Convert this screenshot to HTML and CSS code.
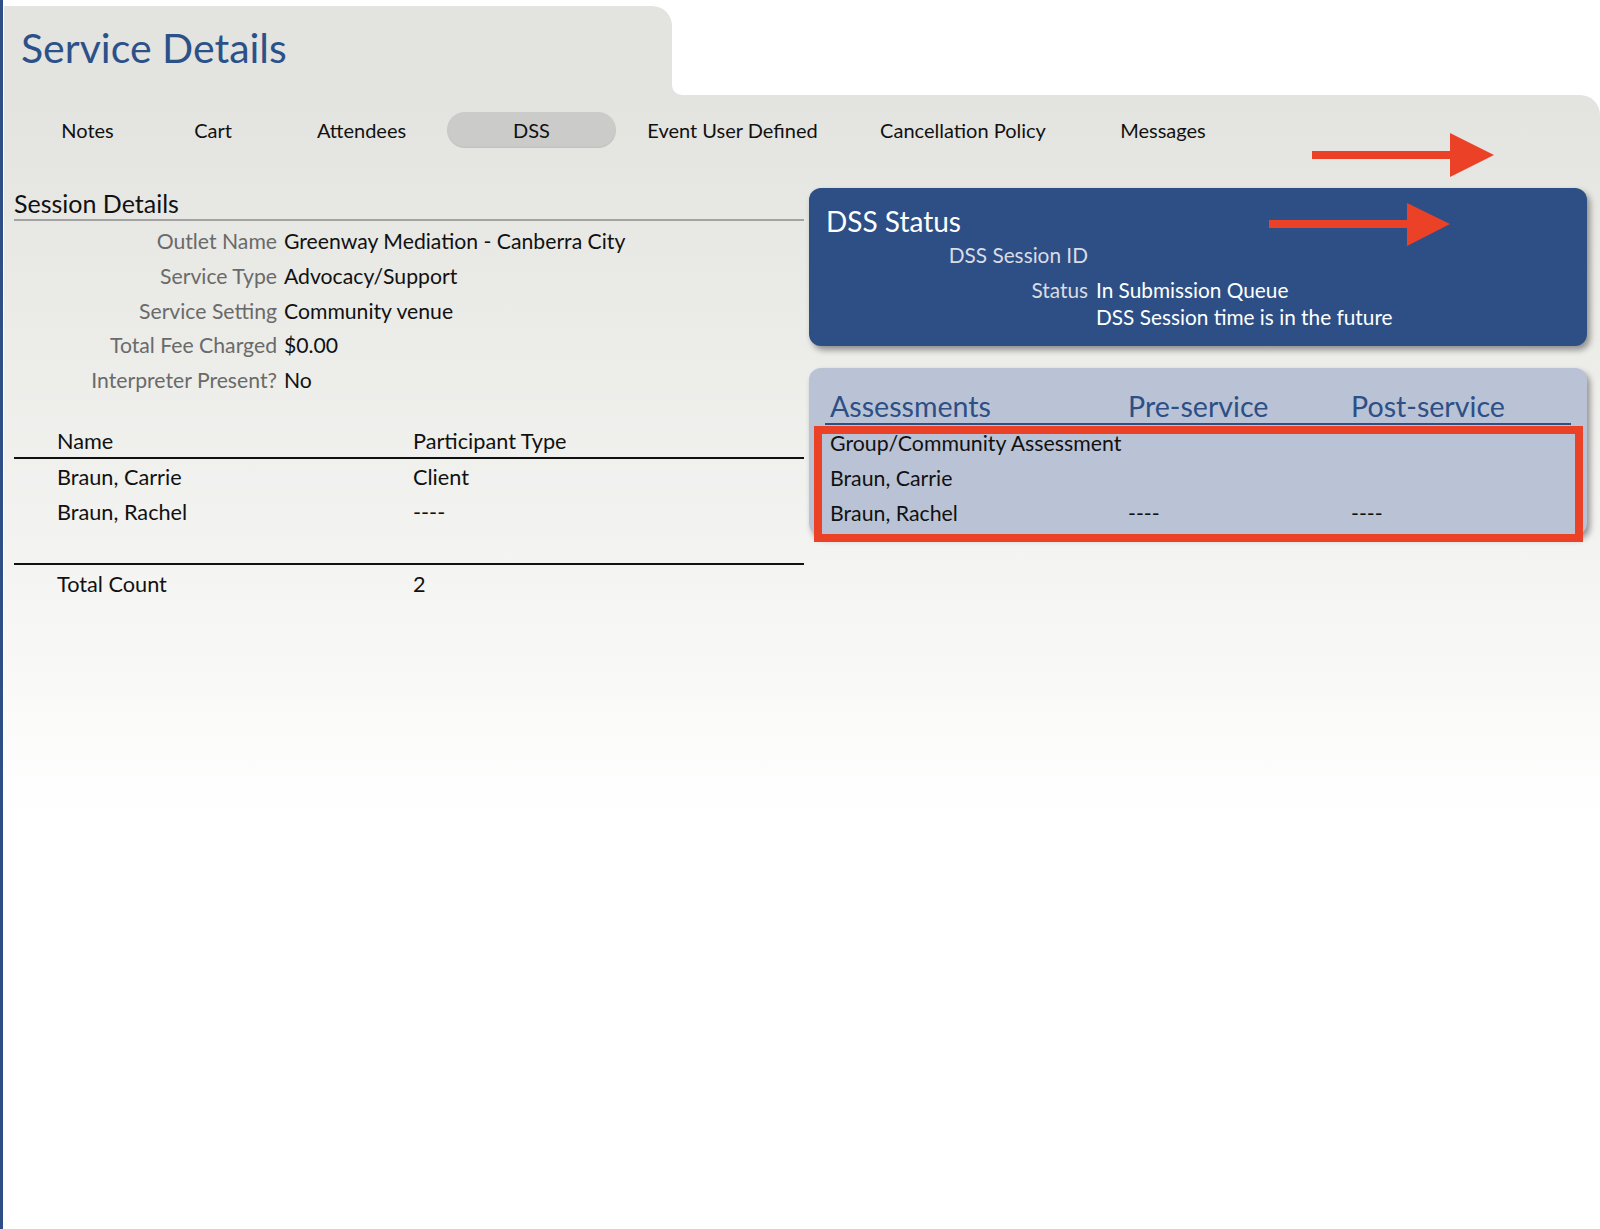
FILE: index.html
```html
<!DOCTYPE html>
<html lang="en">
<head>
  <meta charset="UTF-8">
  <title>Service Details</title>
  <link rel="stylesheet" href="styles.css">
</head>
<body>
  <div class="page">
    <div class="head">
      <div class="title-tab">
        <h1>Service Details</h1>
      </div>
      <div class="head-fill"><div class="head-gap"></div></div>
    </div>

    <div class="main">
      <ul class="tabs">
        <li class="tab tab-notes">Notes</li>
        <li class="tab tab-cart">Cart</li>
        <li class="tab tab-attendees">Attendees</li>
        <li class="tab tab-dss active">DSS</li>
        <li class="tab tab-event">Event User Defined</li>
        <li class="tab tab-policy">Cancellation Policy</li>
        <li class="tab tab-messages">Messages</li>
      </ul>

      <div class="columns">
        <div class="session">
          <h2>Session Details</h2>
          <div class="details">
            <span class="label">Outlet Name</span><span class="value">Greenway Mediation - Canberra City</span>
            <span class="label">Service Type</span><span class="value">Advocacy/Support</span>
            <span class="label">Service Setting</span><span class="value">Community venue</span>
            <span class="label">Total Fee Charged</span><span class="value">$0.00</span>
            <span class="label">Interpreter Present?</span><span class="value">No</span>
          </div>

          <table class="people">
            <thead>
              <tr><th class="col-name">Name</th><th>Participant Type</th></tr>
            </thead>
            <tbody>
              <tr><td class="col-name">Braun, Carrie</td><td>Client</td></tr>
              <tr><td class="col-name">Braun, Rachel</td><td>----</td></tr>
              <tr class="spacer"><td colspan="2"></td></tr>
            </tbody>
            <tfoot>
              <tr><td class="col-name">Total Count</td><td>2</td></tr>
            </tfoot>
          </table>
        </div>

        <div class="side">
          <div class="dss-box">
            <h3>DSS Status</h3>
            <div class="dss-grid">
              <span class="dss-label">DSS Session ID</span><span class="dss-value"></span>
              <span class="dss-label">Status</span><span class="dss-value">In Submission Queue<br>DSS Session time is in the future</span>
            </div>
          </div>

          <div class="assess-box">
            <table class="assess">
              <thead>
                <tr><th class="a-name">Assessments</th><th class="a-pre">Pre-service</th><th>Post-service</th></tr>
              </thead>
              <tbody>
                <tr><td>Group/Community Assessment</td><td></td><td></td></tr>
                <tr><td>Braun, Carrie</td><td></td><td></td></tr>
                <tr><td>Braun, Rachel</td><td>----</td><td>----</td></tr>
              </tbody>
            </table>
            <div class="highlight"></div>
          </div>
        </div>
      </div>
    </div>

    <svg class="arrows" width="1600" height="260" viewBox="0 0 1600 260">
      <rect x="1312" y="151" width="140" height="8" fill="#eb4127"/>
      <polygon points="1450,133 1494,155 1450,177" fill="#eb4127"/>
      <rect x="1269" y="220" width="140" height="8" fill="#eb4127"/>
      <polygon points="1407,203 1450,224 1407,246" fill="#eb4127"/>
    </svg>
  </div>
</body>
</html>
```

FILE: styles.css
```css
html, body {
  margin: 0;
  height: 100%;
}
body {
  font-family: Lato, "Open Sans", sans-serif;
  background: #fff;
  border-left: 3px solid #2d4f86;
  min-height: 1229px;
  box-sizing: border-box;
}
.page {
  position: relative;
  margin-left: 1px;
  padding-top: 6px;
}
.head {
  display: flex;
  height: 89px;
}
.title-tab {
  width: 668px;
  background: #e3e3df;
  border-top-right-radius: 20px;
  box-sizing: border-box;
  padding: 22px 0 0 17px;
}
.title-tab h1 {
  margin: 0;
  font-size: 41px;
  font-weight: normal;
  line-height: 40px;
  color: #2c5189;
}
.head-fill {
  flex: 1;
  background: #e3e3df;
}
.head-gap {
  height: 100%;
  background: #fff;
  border-bottom-left-radius: 10px;
}
.main {
  background: linear-gradient(#e3e3df 0px, #f4f4f2 480px, #fff 720px);
  border-top-right-radius: 20px;
  min-height: 1134px;
  padding: 0 13px 0 10px;
}

/* tab strip */
.tabs {
  list-style: none;
  margin: 0;
  padding: 17px 0 0 11px;
  display: flex;
  height: 36px;
  margin-bottom: 40px;
}
.tab {
  font-size: 20px;
  line-height: 36px;
  color: #111;
  text-align: center;
  border-radius: 18px;
}
.tab-notes { width: 125px; }
.tab-cart { width: 126px; }
.tab-attendees { width: 171px; }
.tab-dss { width: 169px; }
.tab-event { width: 233px; }
.tab-policy { width: 228px; }
.tab-messages { width: 172px; }
.tab.active {
  background: #cbcbc9;
  box-shadow: inset 0 -1px 2px rgba(0,0,0,0.06);
}

.columns {
  display: flex;
  gap: 5px;
}

/* session details */
.session {
  width: 790px;
}
.session h2 {
  margin: 0;
  font-size: 25px;
  font-weight: normal;
  line-height: 31px;
  color: #111;
  border-bottom: 2px solid #a3a3a3;
}
.details {
  display: grid;
  grid-template-columns: 263px 1fr;
  column-gap: 7px;
  grid-auto-rows: 34.7px;
  align-items: center;
  margin-top: 3px;
  font-size: 21.2px;
}
.label {
  text-align: right;
  color: #6a6a6a;
}
.value {
  color: #111;
}
.people {
  width: 100%;
  margin-top: 28px;
  border-collapse: collapse;
  font-size: 21.7px;
  color: #111;
}
.people th {
  font-weight: normal;
  text-align: left;
  height: 32px;
  padding: 0;
  border-bottom: 2px solid #111;
}
.people td {
  height: 35px;
  padding: 0;
}
.people .col-name {
  width: 356px;
  padding-left: 43px;
}
.people .spacer td {
  height: 34px;
}
.people tfoot td {
  border-top: 2px solid #111;
  height: 38px;
}

/* DSS status */
.side {
  width: 778px;
}
.dss-box {
  background: #2d4f86;
  border-radius: 12px;
  padding: 17px 17px 16px;
  box-shadow: 3px 4px 6px rgba(0,0,0,0.4);
  color: #fff;
}
.dss-box h3 {
  margin: 0 0 4px;
  font-size: 28px;
  font-weight: normal;
  line-height: 32px;
}
.dss-grid {
  display: grid;
  grid-template-columns: 262px 1fr;
  column-gap: 8px;
  row-gap: 8px;
  font-size: 20.8px;
  line-height: 27px;
}
.dss-label {
  text-align: right;
  color: #d9dce3;
}
.dss-value {
  color: #fff;
}

/* assessments */
.assess-box {
  position: relative;
  margin-top: 22px;
  background: #b9c3d5;
  border-radius: 12px;
  padding: 22px 16px 5px;
  box-shadow: 3px 4px 6px rgba(0,0,0,0.4);
}
.assess {
  width: 100%;
  table-layout: fixed;
  border-collapse: collapse;
  font-size: 21.3px;
  color: #111;
}
.assess th {
  font-size: 28.6px;
  font-weight: normal;
  color: #2d4f86;
  text-align: left;
  height: 33px;
  padding: 0 0 0 5px;
  border-bottom: 2px solid #2d4f86;
  line-height: 33px;
}
.assess td {
  height: 35px;
  padding: 0 0 0 5px;
  white-space: nowrap;
}
.assess .a-name {
  width: 293px;
}
.assess .a-pre {
  width: 218px;
}
.highlight {
  position: absolute;
  left: 5px;
  top: 58px;
  width: 769px;
  height: 116px;
  box-sizing: border-box;
  border: 8px solid #eb4127;
}
.arrows {
  position: absolute;
  left: -4px;
  top: 0;
  pointer-events: none;
}
```
